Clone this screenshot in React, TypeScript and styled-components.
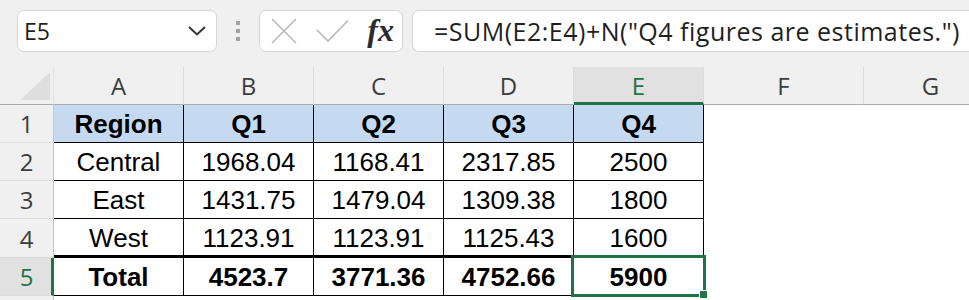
import { Fragment } from "react";
import styled, { createGlobalStyle } from "styled-components";

const GlobalStyle = createGlobalStyle`
  html, body {
    margin: 0;
    padding: 0;
    background: #ffffff;
    overflow: hidden;
  }
  * {
    box-sizing: border-box;
  }
`;

const GREEN = "#217346";

const Page = styled.div`
  width: 969px;
  height: 300px;
  overflow: hidden;
  font-family: "Open Sans", "Noto Sans", sans-serif;
`;

const Toolbar = styled.div`
  display: flex;
  align-items: flex-start;
  height: 67px;
  padding: 10px 0 0 17px;
  background: #f0f0f0;
  overflow: hidden;
`;

const Box = styled.div`
  height: 42px;
  background: #ffffff;
  border: 1px solid #d6d6d6;
  border-radius: 7px;
  display: flex;
  align-items: center;
  flex-shrink: 0;
`;

const NameBox = styled(Box)`
  width: 200px;
  padding: 0 9px 0 6px;
  justify-content: space-between;
  font-size: 23px;
  color: #1f1f1f;
`;

const Grip = styled.div`
  display: flex;
  flex-direction: column;
  gap: 4px;
  margin: 11px 19px 0 19px;

  span {
    width: 4px;
    height: 4px;
    background: #a3a3a3;
  }
`;

const FuncBox = styled(Box)`
  width: 144px;
  padding: 0 8px 0 11px;
  justify-content: space-between;
`;

const Fx = styled.span`
  font-family: "Liberation Serif", "DejaVu Serif", serif;
  font-style: italic;
  font-weight: 700;
  font-size: 32px;
  color: #2b2b2b;
  line-height: 1;
  margin-top: -2px;
`;

const FormulaBox = styled(Box)`
  width: 620px;
  margin-left: 9px;
  padding-left: 21px;
  font-size: 25px;
  letter-spacing: 0.5px;
  color: #1f1f1f;
  white-space: nowrap;
`;

const Sheet = styled.div`
  display: grid;
  grid-template-columns: 54px repeat(5, 130px) 160px 134px;
  grid-template-rows: 38px 38px 38px 38px 39px 38px 38px;
`;

const Corner = styled.div`
  background: #f0f0f0;
  border-bottom: 1px solid #ababab;
  border-right: 1px solid #e2e2e2;
  position: relative;

  &::after {
    content: "";
    position: absolute;
    left: 20px;
    top: 5px;
    width: 0;
    height: 0;
    border-left: 30px solid transparent;
    border-bottom: 28px solid #dedede;
  }
`;

const ColHeader = styled.div<{ $selected?: boolean }>`
  background: ${(p) => (p.$selected ? "#e1e1e1" : "#f0f0f0")};
  border-right: 1px solid #dcdcdc;
  border-bottom: ${(p) => (p.$selected ? `3px solid ${GREEN}` : "1px solid #ababab")};
  color: ${(p) => (p.$selected ? GREEN : "#3d3d3d")};
  font-size: 24px;
  display: flex;
  align-items: center;
  justify-content: center;
  padding-top: ${(p) => (p.$selected ? "2px" : "0")};
`;

const RowHeader = styled.div<{ $selected?: boolean }>`
  background: ${(p) => (p.$selected ? "#e1e1e1" : "#f0f0f0")};
  border-right: ${(p) => (p.$selected ? `3px solid ${GREEN}` : "1px solid #c8c8c8")};
  border-bottom: 1px solid #dcdcdc;
  color: ${(p) => (p.$selected ? GREEN : "#3d3d3d")};
  font-size: 24px;
  display: flex;
  align-items: center;
  justify-content: center;
  padding-left: ${(p) => (p.$selected ? "2px" : "0")};
`;

const Cell = styled.div<{ $head?: boolean; $bold?: boolean; $thick?: boolean }>`
  position: relative;
  background: ${(p) => (p.$head ? "#c5d9f1" : "#ffffff")};
  border-right: 1px solid #000000;
  border-bottom: ${(p) => (p.$thick ? "3px" : "1px")} solid #000000;
  font-family: "Liberation Sans", Arial, sans-serif;
  font-size: 26px;
  font-weight: ${(p) => (p.$bold ? 700 : 400)};
  color: #000000;
  display: flex;
  align-items: center;
  justify-content: center;
  padding-top: 2px;
`;

const Empty = styled.div`
  background: #ffffff;
`;

const Selection = styled.div`
  position: absolute;
  top: -3px;
  left: -3px;
  right: -3px;
  bottom: -2px;
  border: 3px solid ${GREEN};
  pointer-events: none;
`;

const Handle = styled.div`
  position: absolute;
  right: -5px;
  bottom: -5px;
  width: 9px;
  height: 9px;
  background: ${GREEN};
  border: 1px solid #ffffff;
`;

const columns = ["A", "B", "C", "D", "E", "F", "G"];

const rows: string[][] = [
  ["Region", "Q1", "Q2", "Q3", "Q4"],
  ["Central", "1968.04", "1168.41", "2317.85", "2500"],
  ["East", "1431.75", "1479.04", "1309.38", "1800"],
  ["West", "1123.91", "1123.91", "1125.43", "1600"],
  ["Total", "4523.7", "3771.36", "4752.66", "5900"],
];

const Chevron = () => (
  <svg width="20" height="12" viewBox="0 0 20 12">
    <path d="M2 2 L10 9.5 L18 2" fill="none" stroke="#333" strokeWidth="2" />
  </svg>
);

const CancelIcon = () => (
  <svg width="26" height="26" viewBox="0 0 26 26">
    <path d="M1 1 L25 25 M25 1 L1 25" stroke="#b9b9b9" strokeWidth="1.6" fill="none" />
  </svg>
);

const EnterIcon = () => (
  <svg width="33" height="24" viewBox="0 0 33 24">
    <path d="M1 11 L12 22 L32 1.5" stroke="#b9b9b9" strokeWidth="1.6" fill="none" />
  </svg>
);

export default function App() {
  return (
    <Page>
      <GlobalStyle />
      <Toolbar>
        <NameBox>
          <span>E5</span>
          <Chevron />
        </NameBox>
        <Grip>
          <span />
          <span />
          <span />
        </Grip>
        <FuncBox>
          <CancelIcon />
          <EnterIcon />
          <Fx>fx</Fx>
        </FuncBox>
        <FormulaBox>=SUM(E2:E4)+N("Q4 figures are estimates.")</FormulaBox>
      </Toolbar>
      <Sheet>
        <Corner />
        {columns.map((c) => (
          <ColHeader key={c} $selected={c === "E"}>
            {c}
          </ColHeader>
        ))}
        {rows.map((row, r) => (
          <Fragment key={r}>
            <RowHeader $selected={r === 4}>{r + 1}</RowHeader>
            {row.map((value, c) => (
              <Cell key={c} $head={r === 0} $bold={r === 0 || r === 4} $thick={r === 3}>
                {value}
                {r === 4 && c === 4 && (
                  <Selection>
                    <Handle />
                  </Selection>
                )}
              </Cell>
            ))}
            <Empty />
            <Empty />
          </Fragment>
        ))}
        <RowHeader />
      </Sheet>
    </Page>
  );
}
